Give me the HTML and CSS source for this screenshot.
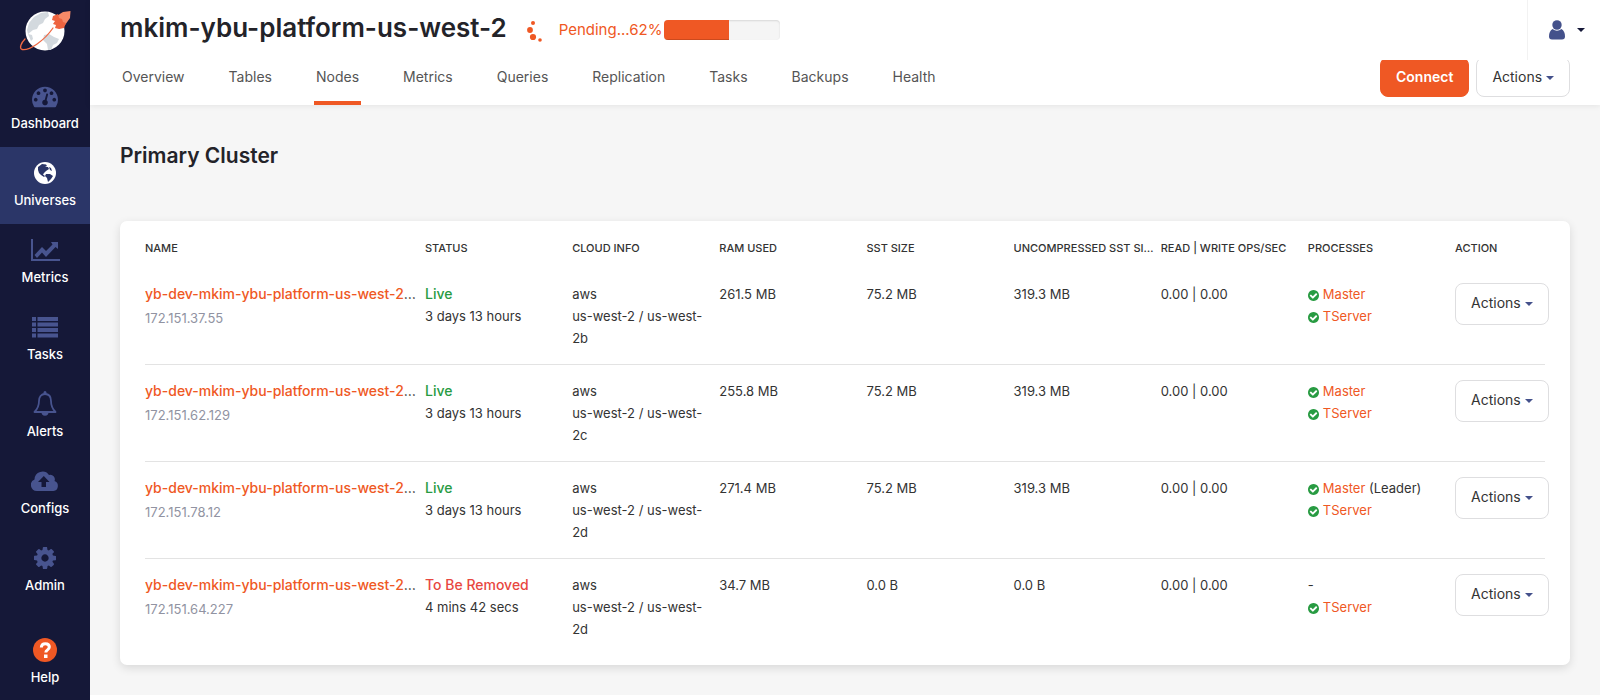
FILE: index.html
```html
<!DOCTYPE html>
<html lang="en">
<head>
<meta charset="utf-8">
<title>mkim-ybu-platform-us-west-2</title>
<link rel="stylesheet" href="styles.css">
</head>
<body>
<svg class="sprite" aria-hidden="true">
  <symbol id="check" viewBox="0 0 1536 1536"><path d="M1284 606q0-28-18-46l-91-90q-19-19-45-19t-45 19L677 877 451 651q-19-19-45-19t-45 19l-91 90q-18 18-18 46 0 27 18 45l362 362q19 19 45 19 27 0 46-19l543-543q18-18 18-45zM1536 768q0 209-103 385.500T1153.500 1433 768 1536t-385.500-103T103 1153.500 0 768t103-385.500T382.500 103 768 0t385.500 103T1433 382.500 1536 768z"/></symbol>
</svg>
<div class="app">
  <aside class="sidebar">
    <a class="logo" href="#" aria-label="Home">
      <svg width="52" height="42" viewBox="0 0 52 42">
        <circle cx="26" cy="21" r="19.500" fill="#fff"/>
        <path d="M10 13l5-6 7-4 7-1 1 4-4 3-2 4-4 2-2 4-4 1-5 4-1-4zM25 25l5-1 5 3 5 2-2 4-4 2-2 5-3 0-1-6-4-4zM9 24l4 1 1 4-2 2z" fill="#d3d9de"/>
        <path d="M6 29C2 33 0 38 3 39.500 10 41 25 31 34 18" fill="none" stroke="#ef6a45" stroke-width="1.300" stroke-linecap="round"/>
        <path d="M36 7l8-5 7.500-1-.5 7-5 7-6 4z" fill="#f58a68"/>
        <path d="M34 6l5-2 1 4 3 1 1 3 3 1-2 5-5 1-4-1 1-3-3-1 2-3-3-1z" fill="#ee6440"/>
      </svg>
    </a>
    <nav class="menu" aria-label="Main">
      <a href="#"><svg width="26" height="22" viewBox="0 0 1792 1536"><path d="M384 1024q0-53-37.500-90.500T256 896t-90.500 37.500T128 1024t37.500 90.500T256 1152t90.500-37.500T384 1024zm192-448q0-53-37.500-90.500T448 448t-90.500 37.500T320 576t37.500 90.500T448 704t90.500-37.500T576 576zm428 481l101-382q6-26-7.500-48.500T1059 597t-48 6.500-30 39.500L880 1025q-60 5-107 43.500t-63 98.500q-20 77 20 146t117 89 146-20 89-117q16-60-6-117t-72-91zm660-33q0-53-37.500-90.500T1536 896t-90.500 37.500-37.500 90.500 37.500 90.500 90.500 37.500 90.500-37.500 37.500-90.500zm-640-640q0-53-37.500-90.500T896 256t-90.500 37.500T768 384t37.500 90.500T896 512t90.500-37.500T1024 384zm448 192q0-53-37.500-90.500T1344 448t-90.500 37.500T1216 576t37.500 90.500T1344 704t90.500-37.500T1472 576zm320 448q0 261-141 483-19 29-54 29H195q-35 0-54-29Q0 1286 0 1024q0-182 71-348t191-286T548 199t348-71 348 71 286 191 191 286 71 348z"/></svg><span>Dashboard</span></a>
      <a class="active" href="#"><svg width="22" height="22" viewBox="0 0 22 22"><circle cx="11" cy="11" r="11"/><path d="M4 5L8 2l4 .5 1 1.500-2 1 3 0 1 2-3 2-2 2-1 1.500 2 1.500-1 1-3-2-2-2-1-3zM12 12l4 0 3 2-2 3-3 3-1-4-2-2zM15 5l2 1 1 3-2-1z" fill="#2b3668"/></svg><span>Universes</span></a>
      <a href="#"><svg width="29" height="22" viewBox="0 0 29 22"><path d="M0 0h2v20h27v2H0zM3.500 16L11 8l4 4 6.500-6.500L20 3h7v7l-2.500-2L15 18l-4-4.500L6 19z"/></svg><span>Metrics</span></a>
      <a href="#"><svg width="26" height="22" viewBox="0 0 26 22"><path d="M0 1h4v4H0zM5.500 1H26v4H5.500zM0 6.500h4v4H0zM5.500 6.500H26v4H5.500zM0 12h4v4H0zM5.500 12H26v4H5.500zM0 17.500h4v4H0zM5.500 17.500H26v4H5.500z"/></svg><span>Tasks</span></a>
      <a href="#"><svg width="24" height="26" viewBox="0 0 24 26"><path d="M1.500 21c3-3 4.500-6 4.500-11 0-4 2-7 6-7s6 3 6 7c0 5 1.500 8 4.500 11z" fill="none" stroke="#48548f" stroke-width="1.800" stroke-linejoin="round"/><path d="M10.500 3V1.500a1.500 1.500 0 0 1 3 0V3zM8.500 21h7a3.500 3.800 0 0 1-7 0z"/></svg><span>Alerts</span></a>
      <a href="#"><svg width="28" height="20" viewBox="0 0 28 20"><path fill-rule="evenodd" d="M6 20a6 6 0 0 1-2.500-11.500A8 8 0 0 1 18 4a4.500 4.500 0 0 1 5.500 6A5.200 5.200 0 0 1 22.500 20zM10.500 16h4.500v-5h3.500L12.800 5 7 11h3.500z"/></svg><span>Configs</span></a>
      <a href="#"><svg width="22" height="22" viewBox="0 0 1536 1536"><path d="M1024 768q0-106-75-181t-181-75-181 75-75 181 75 181 181 75 181-75 75-181zm512-109v222q0 12-8 23t-20 13l-185 28q-19 54-39 91 35 50 107 138 10 12 10 25t-9 23q-27 37-99 108t-94 71q-12 0-26-9l-138-108q-44 23-91 38-16 136-29 186-7 28-36 28H657q-14 0-24.500-8.500T621 1506l-28-184q-49-16-90-37l-141 107q-10 9-25 9-14 0-25-11-126-114-165-168-7-10-7-23 0-12 8-23 15-21 51-66.500t54-70.500q-27-50-41-99L29 913q-13-2-21-12.500T0 877V655q0-12 8-23t19-13l186-28q14-46 39-92-40-57-107-138-10-12-10-24 0-10 9-23 26-36 98.500-107.500T337 135q13 0 26 10l138 107q44-23 91-38 16-136 29-186 7-28 36-28h222q14 0 24.500 8.500T915 30l28 184q49 16 90 37l142-107q9-9 24-9 13 0 25 10 129 119 165 170 7 8 7 22 0 12-8 23-15 21-51 66.500t-54 70.500q26 50 41 98l183 28q13 2 21 12.500t8 23.500z"/></svg><span>Admin</span></a>
      <a class="help" href="#"><svg width="24" height="24" viewBox="0 0 24 24"><circle cx="12" cy="12" r="12" fill="#ef5824"/><path d="M8.300 9.500C8.500 6.600 10 5.700 12.300 5.700c2.400 0 4 1.300 4 3.300 0 3-3.500 2.700-3.500 5.500" fill="none" stroke="#fff" stroke-width="3"/><path d="M11 16.500h3.500v3.500H11z" fill="#fff"/></svg><span>Help</span></a>
    </nav>
  </aside>

  <div class="main">
    <header class="header">
      <div class="topbar">
        <h1>mkim-ybu-platform-us-west-2</h1>
        <svg class="spinner" width="16" height="22" viewBox="0 0 16 22"><circle cx="6" cy="4" r="2"/><circle cx="3" cy="11" r="2.900"/><circle cx="6" cy="18" r="3.100"/><circle cx="13" cy="21" r="1.800"/></svg>
        <span class="pending">Pending...62%</span>
        <div class="progress" role="progressbar" aria-label="Update progress"><div class="progress-fill"></div></div>
        <button class="user" type="button" aria-label="Account"><svg width="16" height="20" viewBox="0 0 16 20"><ellipse cx="8" cy="5" rx="4.700" ry="4.800"/><path d="M3.500 9Q8 12.500 12.500 9 16 11 16 16.500q0 3-3 3H3q-3 0-3-3Q0 11 3.500 9z"/></svg><i class="caret"></i></button>
      </div>
      <div class="toolbar">
        <nav class="tabs" aria-label="Universe">
          <a href="#">Overview</a><a href="#">Tables</a><a class="active" href="#">Nodes</a><a href="#">Metrics</a><a href="#">Queries</a><a href="#">Replication</a><a href="#">Tasks</a><a href="#">Backups</a><a href="#">Health</a>
        </nav>
        <div class="page-actions">
          <button class="btn btn-primary" type="button">Connect</button>
          <button class="btn" type="button">Actions <i class="caret"></i></button>
        </div>
      </div>
    </header>

    <main class="content">
      <h2>Primary Cluster</h2>
      <section class="card">
        <table>
          <colgroup><col class="col-name"><col span="7"><col class="col-action"></colgroup>
          <thead>
            <tr><th>Name</th><th>Status</th><th>Cloud Info</th><th>RAM Used</th><th>SST Size</th><th>Uncompressed SST Size</th><th>Read | Write ops/sec</th><th>Processes</th><th>Action</th></tr>
          </thead>
          <tbody>
            <tr>
              <td><div class="name"><a href="#">yb-dev-mkim-ybu-platform-us-west-2-n1</a></div><div class="ip">172.151.37.55</div></td>
              <td><div class="live">Live</div>3 days 13 hours</td>
              <td>aws<br>us-west-2 / us-west-2b</td>
              <td>261.5 MB</td><td>75.2 MB</td><td>319.3 MB</td><td>0.00 | 0.00</td>
              <td><div class="process"><svg class="check"><use href="#check"/></svg><a href="#">Master</a></div><div class="process"><svg class="check"><use href="#check"/></svg><a href="#">TServer</a></div></td>
              <td class="action"><button class="btn" type="button">Actions <i class="caret"></i></button></td>
            </tr>
            <tr>
              <td><div class="name"><a href="#">yb-dev-mkim-ybu-platform-us-west-2-n2</a></div><div class="ip">172.151.62.129</div></td>
              <td><div class="live">Live</div>3 days 13 hours</td>
              <td>aws<br>us-west-2 / us-west-2c</td>
              <td>255.8 MB</td><td>75.2 MB</td><td>319.3 MB</td><td>0.00 | 0.00</td>
              <td><div class="process"><svg class="check"><use href="#check"/></svg><a href="#">Master</a></div><div class="process"><svg class="check"><use href="#check"/></svg><a href="#">TServer</a></div></td>
              <td class="action"><button class="btn" type="button">Actions <i class="caret"></i></button></td>
            </tr>
            <tr>
              <td><div class="name"><a href="#">yb-dev-mkim-ybu-platform-us-west-2-n3</a></div><div class="ip">172.151.78.12</div></td>
              <td><div class="live">Live</div>3 days 13 hours</td>
              <td>aws<br>us-west-2 / us-west-2d</td>
              <td>271.4 MB</td><td>75.2 MB</td><td>319.3 MB</td><td>0.00 | 0.00</td>
              <td><div class="process"><svg class="check"><use href="#check"/></svg><a href="#">Master</a> (Leader)</div><div class="process"><svg class="check"><use href="#check"/></svg><a href="#">TServer</a></div></td>
              <td class="action"><button class="btn" type="button">Actions <i class="caret"></i></button></td>
            </tr>
            <tr>
              <td><div class="name"><a href="#">yb-dev-mkim-ybu-platform-us-west-2-n4</a></div><div class="ip">172.151.64.227</div></td>
              <td><div class="removed">To Be Removed</div>4 mins 42 secs</td>
              <td>aws<br>us-west-2 / us-west-2d</td>
              <td>34.7 MB</td><td>0.0 B</td><td>0.0 B</td><td>0.00 | 0.00</td>
              <td><div class="process">-</div><div class="process"><svg class="check"><use href="#check"/></svg><a href="#">TServer</a></div></td>
              <td class="action"><button class="btn" type="button">Actions <i class="caret"></i></button></td>
            </tr>
          </tbody>
        </table>
      </section>
    </main>
  </div>
</div>
</body>
</html>
```

FILE: styles.css
```css
* { box-sizing: border-box; }

body {
  margin: 0;
  background: #fff;
  color: #333;
  font: 13px/22px Inter, "Liberation Sans", sans-serif;
}

a { color: #ef5824; text-decoration: none; }
button { font-family: inherit; cursor: pointer; }
h1, h2 { margin: 0; color: #232329; font-weight: 600; }
.sprite { display: none; }

.app { display: flex; min-height: 100vh; }

.sidebar {
  display: flex;
  flex-direction: column;
  flex: 0 0 90px;
  background: #151838;
}
.logo { display: flex; justify-content: center; height: 70px; padding-top: 10px; }
.menu { display: flex; flex-direction: column; flex: 1; }
.menu a {
  display: flex;
  flex-direction: column;
  align-items: center;
  gap: 4px;
  height: 77px;
  padding-top: 13px;
  color: #fff;
  font-size: 13px;
  line-height: 20px;
  font-weight: 500;
}
.menu svg { height: 26px; fill: #48548f; }
.menu .active { background: #2b3668; }
.menu .active svg { fill: #fff; }
.menu .help { height: 63px; padding-top: 0; margin-top: auto; }

.main { flex: 1; min-width: 0; }

.header {
  position: relative;
  background: #fff;
  box-shadow: 0 1px 6px rgba(0, 0, 0, 0.08);
}
.topbar { display: flex; align-items: center; height: 60px; padding-left: 30px; }
.topbar h1 { font-size: 26px; line-height: 32px; padding-bottom: 4px; }
.spinner { margin-left: 20px; fill: #ef5824; overflow: visible; }
.pending { margin: 0 2px 0 16px; color: #ef5824; font-size: 15px; }
.progress {
  width: 116px;
  height: 20px;
  border-radius: 4px;
  overflow: hidden;
  background: #f5f5f5;
  box-shadow: inset 0 1px 2px rgba(0, 0, 0, 0.12);
}
.progress-fill { width: 56%; height: 100%; background: #ef5824; box-shadow: inset 0 -1px 0 rgba(0, 0, 0, 0.15); }
.user {
  display: flex;
  align-items: center;
  gap: 12px;
  align-self: stretch;
  margin-left: auto;
  padding: 0 15px 0 21px;
  border: 0;
  border-left: 1px solid #f2f2f2;
  background: none;
}
.user svg { fill: #44518b; }
.user .caret { color: #151838; }

.caret {
  display: inline-block;
  border: 4px solid transparent;
  border-top-color: currentColor;
  border-bottom: 0;
  vertical-align: middle;
  color: #44518b;
}

.toolbar { display: flex; justify-content: space-between; height: 45px; padding: 0 30px; }
.tabs { display: flex; gap: 40px; }
.tabs a {
  padding: 6px 2px 0;
  border-bottom: 4px solid transparent;
  color: #555;
  font-size: 14px;
}
.tabs .active { border-color: #ef5824; }
.page-actions {
  display: flex;
  align-items: flex-end;
  gap: 7px;
  padding-bottom: 8px;
  overflow: hidden;
}

.btn {
  flex: none;
  height: 42px;
  padding: 0 15px;
  border: 1px solid #dedee0;
  border-radius: 8px;
  background: #fff;
  color: #333;
  font-size: 14px;
  line-height: 20px;
  white-space: nowrap;
}
.page-actions .btn { height: 40px; }
.page-actions .btn-primary { border-color: #ef5824; background: #ef5824; color: #fff; font-weight: 600; }

.content { padding: 36px 30px 30px; background: #f6f6f6; }
.content h2 { font-size: 21px; line-height: 30px; }

.card {
  margin-top: 50px;
  padding: 0 25px 9px;
  border-radius: 7px;
  background: #fff;
  box-shadow: 0 3px 10px rgba(0, 0, 0, 0.12);
}
table { width: 100%; table-layout: fixed; border-spacing: 0; }
.col-name { width: 20%; }
.col-action { width: 90px; }
th {
  height: 47px;
  padding: 6px 4px 0 0;
  overflow: hidden;
  text-align: left;
  text-overflow: ellipsis;
  text-transform: uppercase;
  white-space: nowrap;
  font-size: 11px;
  font-weight: 500;
}
td { height: 97px; padding: 15px 8px 15px 0; border-bottom: 1px solid #e3e3e3; vertical-align: top; }
tbody tr:last-child td { border-bottom-color: transparent; }
.name { overflow: hidden; text-overflow: ellipsis; white-space: nowrap; font-size: 14px; }
.name a, .live, .removed { font-size: 14px; font-weight: 500; }
.ip { margin-top: 2px; color: #9193a2; }
.live { color: #289b42; }
.removed { color: #e8473f; }
.process { white-space: nowrap; }
.check { width: 11px; height: 11px; margin-right: 4px; fill: #289b42; vertical-align: -2px; }
.action { padding: 15px 0 0; }
.action .btn { padding-bottom: 2px; }
```
